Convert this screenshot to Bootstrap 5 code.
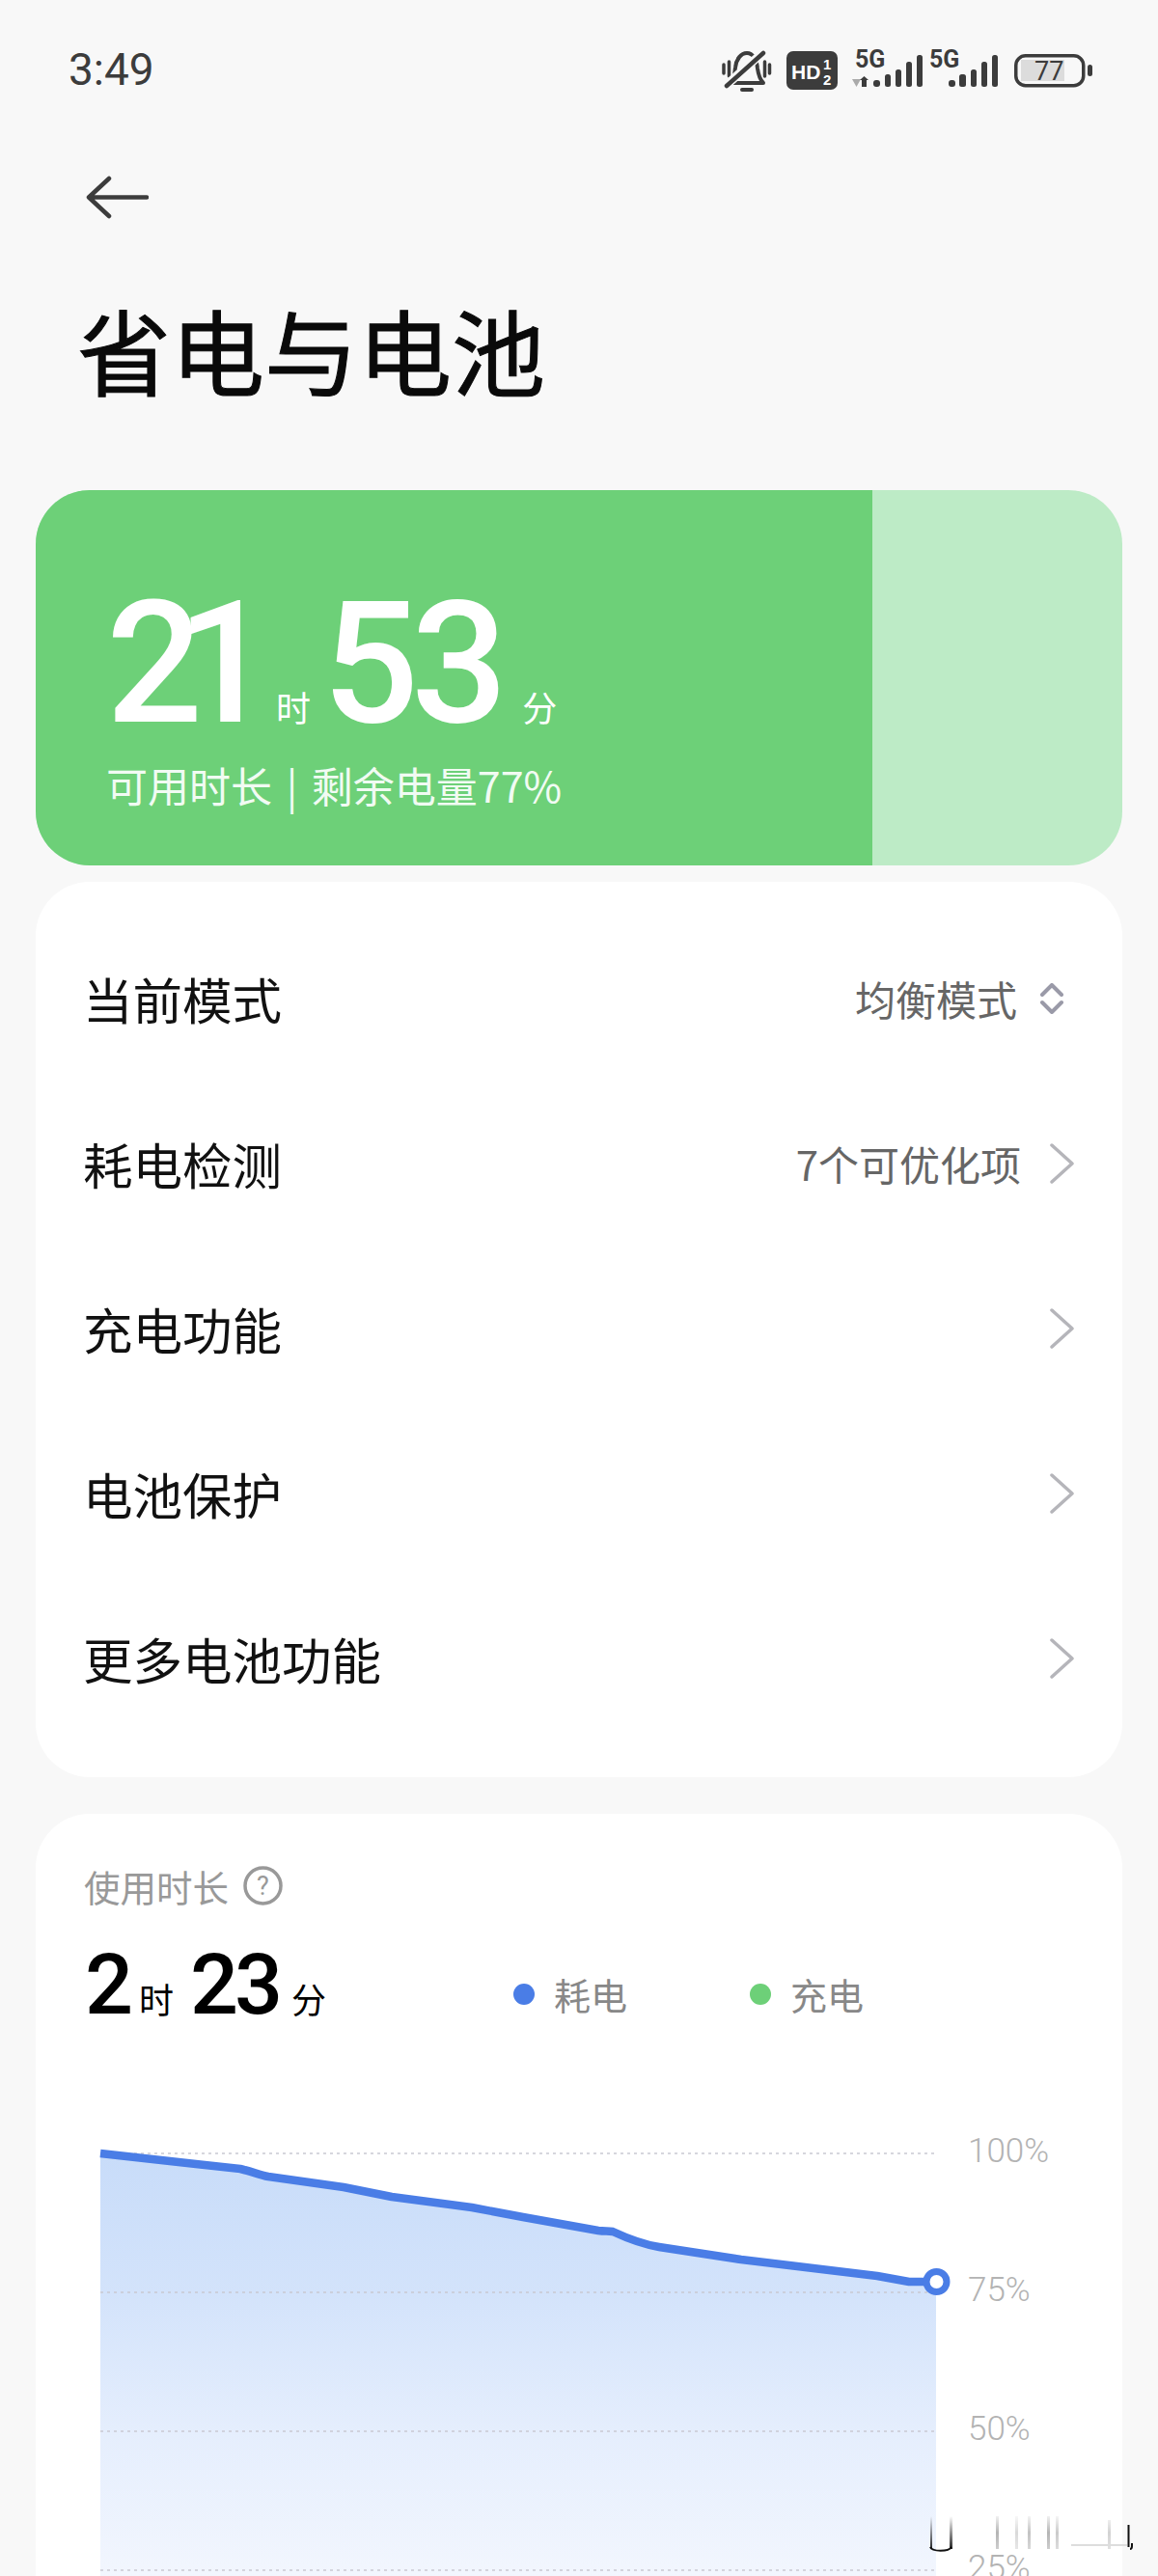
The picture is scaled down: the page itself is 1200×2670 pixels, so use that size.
<!DOCTYPE html>
<html lang="zh">
<head>
<meta charset="utf-8">
<title>省电与电池</title>
<link href="https://cdn.jsdelivr.net/npm/bootstrap@5.3.0/dist/css/bootstrap.min.css" rel="stylesheet">
<style>
html,body{height:2670px;overflow:hidden;}
body{background:#f8f8f8;font-family:"Noto Sans CJK SC","Noto Sans",sans-serif;width:1200px;position:relative;}
.num{font-family:Roboto,"Noto Sans CJK SC",sans-serif;}
.status-row{height:96px;padding:44px 68px 0 71px;}
.clock{font-family:Roboto,sans-serif;font-size:46px;line-height:44px;color:#3c3c3c;margin-top:6px;font-weight:400;}
.status-icons svg{display:block;height:52px;}
.back-wrap{padding:86px 0 0 89px;height:131px;}
.back-wrap svg{display:block;}
.page-title{font-size:97px;line-height:120px;font-weight:400;-webkit-text-stroke:1px #0a0a0a;color:#0a0a0a;margin:74px 0 87px 80px;}
.sheet{margin:0 37px;border:0;border-radius:56px;overflow:hidden;}
.batt-card{height:389px;background:#bdebc6;margin-bottom:17px;}
.batt-fill{background:#6dd078;height:100%;color:#fff;padding:100px 0 0 73px;}
.batt-big{font-size:176px;line-height:160px;font-weight:500;letter-spacing:-8px;}
.batt-big-tight{letter-spacing:-27px;}
.batt-unit{font-size:36px;line-height:40px;}
.batt-unit-h{margin:0 12px 0 30px;}
.batt-unit-m{margin-left:23px;}
.batt-time{align-items:baseline;}
.batt-sub{font-size:43px;line-height:56px;word-spacing:5px;color:#f1fbf3;margin-top:17px;font-weight:400;}
.menu-card{height:928px;margin-bottom:38px;padding:35px 0 37px;background:#fff;}
.menu-row{height:171px;border:0;padding:0 50px 0 49px;background:transparent;}
.menu-name{font-size:51.5px;color:#111;}
.menu-val{font-size:42px;color:#666;}
.menu-row svg{display:block;}
.val-mode{gap:24px;margin-right:11px;}
.val-count{gap:30px;}
.use-card{height:900px;background:#fff;padding:54px 0 0 50px;border-radius:56px 56px 0 0;}
.use-head{font-size:37.5px;line-height:41px;color:#999;gap:15px;}
.use-time{margin-top:42px;color:#000;height:80px;margin-left:1px;}
.use-big{font-size:88px;line-height:80px;font-weight:500;letter-spacing:-4px;}
.use-unit{font-size:36px;line-height:40px;}
.use-unit-h{margin:0 17px 0 10px;}
.use-unit-m{margin-left:13px;}
.legend-wrap{margin:28px 0 0 194px;gap:127px;font-size:38px;color:#888;line-height:44px;}
.legend-dot{width:22px;height:22px;border-radius:50%;margin-right:20px;}
.chart-wrap{margin:103px 0 0 17px;}
.chart-wrap svg{display:block;overflow:visible;}
.axis-col{gap:84px;}
.axis-label{font-family:Roboto,sans-serif;font-weight:300;font-size:35px;line-height:60px;height:60px;color:#b3b3b3;}
.glitch{position:absolute;left:880px;top:2590px;}
</style>
</head>
<body>
<div class="status-row d-flex justify-content-between align-items-start">
  <div class="clock">3:49</div>
  <div class="status-icons d-flex">
    <svg width="67" viewBox="0 -8 67 52" fill="none" stroke="#3c3c3c" stroke-linecap="round"><path d="M2 15v9M7.500 12v15M44.500 12v15M49.500 15v9" stroke-width="3.500"/><path d="M11 34h32c-4-4-5-8-6-15-1-10-5-16-11-16s-11 6-12 15c-1 7-1 12-3 16z" stroke-width="4" stroke-linejoin="round"/><path d="M5 36 43 2" stroke="#f8f8f8" stroke-width="9"/><path d="M5 37 43 3" stroke-width="4.500"/><path d="M21 41h10" stroke-width="4"/></svg>
    <svg width="68" viewBox="0 -8 68 52"><rect y="1" width="53" height="40" rx="7" fill="#3c3c3c"/><text x="5" y="30" font-family="Liberation Sans" font-weight="700" font-size="21" fill="#fff">HD</text><text x="38" y="20" font-family="Liberation Sans" font-weight="700" font-size="15" fill="#fff">1</text><text x="38" y="36" font-family="Liberation Sans" font-weight="700" font-size="15" fill="#fff">2</text></svg>
    <svg width="80" viewBox="0 -8 80 52" fill="#3c3c3c"><text x="3" y="18" font-family="Roboto" font-weight="700" font-size="25">5G</text><path d="M0 30h9l-4.500 8z" fill="#aaa"/><path d="M10 38V31H8l4.500-4 4.500 4h-2v7z"/><rect x="22" y="31" width="7" height="7" rx="3"/><rect x="34" y="25" width="6" height="13" rx="2.500"/><rect x="45" y="20" width="6" height="18" rx="2.500"/><rect x="56" y="12" width="6" height="26" rx="2.500"/><rect x="67" y="5" width="6" height="33" rx="2.500"/></svg>
    <svg width="88" viewBox="0 -8 88 52" fill="#3c3c3c"><text x="0" y="18" font-family="Roboto" font-weight="700" font-size="25">5G</text><rect x="20" y="31" width="7" height="7" rx="3"/><rect x="31" y="25" width="7" height="13" rx="2.500"/><rect x="43" y="20" width="6" height="18" rx="2.500"/><rect x="54" y="12" width="6" height="26" rx="2.500"/><rect x="65" y="5" width="6" height="33" rx="2.500"/></svg>
    <svg width="81" viewBox="0 -8 81 52"><rect x="1.750" y="5.750" width="70" height="31" rx="10" fill="none" stroke="#3c3c3c" stroke-width="3.500"/><rect x="7" y="10" width="45" height="22" fill="#dcdcdc"/><text x="21" y="31" font-family="Roboto" font-size="27" fill="#3c3c3c">77</text><rect x="76" y="15" width="5" height="12" rx="2.500" fill="#3c3c3c"/></svg>
  </div>
</div>
<div class="back-wrap">
  <svg width="65" height="45" viewBox="0 0 65 45" fill="none" stroke="#3c3c3c" stroke-width="4.500" stroke-linecap="round" stroke-linejoin="round"><path d="M3 22.500h60M24 3 3 22.500 24 42"/></svg>
</div>
<h1 class="page-title">省电与电池</h1>

<div class="card sheet batt-card d-flex flex-row">
  <div class="batt-fill" style="width:77%">
    <div class="d-flex batt-time num">
      <span class="batt-big batt-big-tight">21</span><span class="batt-unit batt-unit-h">时</span><span class="batt-big">53</span><span class="batt-unit batt-unit-m">分</span>
    </div>
    <div class="batt-sub">可用时长 | 剩余电量77%</div>
  </div>
</div>

<div class="card sheet menu-card">
  <div class="list-group list-group-flush">
    <div class="list-group-item menu-row d-flex justify-content-between align-items-center"><span class="menu-name">当前模式</span><span class="d-flex align-items-center val-mode"><span class="menu-val">均衡模式</span><svg width="24" height="32" viewBox="0 0 24 32" fill="none" stroke="#9a9aa8" stroke-width="4" stroke-linecap="round" stroke-linejoin="round"><path d="M2 12 12 2l10 10M2 20l10 10 10-10"/></svg></span></div>
    <div class="list-group-item menu-row d-flex justify-content-between align-items-center"><span class="menu-name">耗电检测</span><span class="d-flex align-items-center val-count"><span class="menu-val">7个可优化项</span><svg width="25" height="42" viewBox="0 0 25 42" fill="none" stroke="#b5b5ba" stroke-width="3.500" stroke-linecap="round" stroke-linejoin="round"><path d="M2 2l21 19L2 40"/></svg></span></div>
    <div class="list-group-item menu-row d-flex justify-content-between align-items-center"><span class="menu-name">充电功能</span><svg width="25" height="42" viewBox="0 0 25 42" fill="none" stroke="#b5b5ba" stroke-width="3.500" stroke-linecap="round" stroke-linejoin="round"><path d="M2 2l21 19L2 40"/></svg></div>
    <div class="list-group-item menu-row d-flex justify-content-between align-items-center"><span class="menu-name">电池保护</span><svg width="25" height="42" viewBox="0 0 25 42" fill="none" stroke="#b5b5ba" stroke-width="3.500" stroke-linecap="round" stroke-linejoin="round"><path d="M2 2l21 19L2 40"/></svg></div>
    <div class="list-group-item menu-row d-flex justify-content-between align-items-center"><span class="menu-name">更多电池功能</span><svg width="25" height="42" viewBox="0 0 25 42" fill="none" stroke="#b5b5ba" stroke-width="3.500" stroke-linecap="round" stroke-linejoin="round"><path d="M2 2l21 19L2 40"/></svg></div>
  </div>
</div>

<div class="card sheet use-card">
  <div class="use-head d-flex align-items-center"><span>使用时长</span>
    <svg width="41" height="41" viewBox="0 0 41 41"><circle cx="20.500" cy="20.500" r="18.500" fill="none" stroke="#999" stroke-width="3.500"/><text x="20.500" y="29.500" text-anchor="middle" font-family="Roboto" font-size="27" fill="#999">?</text></svg>
  </div>
  <div class="use-time d-flex align-items-start">
    <div class="d-flex align-items-baseline num"><span class="use-big">2</span><span class="use-unit use-unit-h">时</span><span class="use-big">23</span><span class="use-unit use-unit-m">分</span></div>
    <div class="legend-wrap d-flex">
      <span class="d-flex align-items-center"><span class="legend-dot" style="background:#4a7de6"></span>耗电</span>
      <span class="d-flex align-items-center"><span class="legend-dot" style="background:#6dd078"></span>充电</span>
    </div>
  </div>
  <div class="chart-wrap d-flex">
    <svg width="899" height="470" viewBox="104 2200 899 470">
      <defs><linearGradient id="areaFill" gradientUnits="userSpaceOnUse" x1="0" y1="2232" x2="0" y2="2670"><stop offset="0" stop-color="#c8dcf9"/><stop offset=".33" stop-color="#d3e3fb"/><stop offset=".66" stop-color="#e5eefd"/><stop offset="1" stop-color="#f2f6fe"/></linearGradient></defs>
      <path d="M104 2232L203 2243 249 2248C262 2251 268 2254 278 2256L356 2267 406 2277 489 2288 542 2298 620 2312C627 2313 630 2312 635 2313 650 2320 665 2326 683 2329L768 2342 909 2359 942 2365H970V2670H104Z" fill="url(#areaFill)"/>
      <g stroke="#c9c9d2" stroke-width="1.500" stroke-dasharray="3 4"><path d="M104 2232H970M104 2376H970M104 2520H970M104 2664H970"/></g>
      <path d="M104 2232L203 2243 249 2248C262 2251 268 2254 278 2256L356 2267 406 2277 489 2288 542 2298 620 2312C627 2313 630 2312 635 2313 650 2320 665 2326 683 2329L768 2342 909 2359 942 2365H970" fill="none" stroke="#4a7de6" stroke-width="8.500" stroke-linejoin="round"/>
      <circle cx="970.500" cy="2365" r="10.500" fill="#fff" stroke="#4a7de6" stroke-width="7"/>
    </svg>
    <div class="axis-col d-flex flex-column">
      <div class="axis-label">100%</div><div class="axis-label">75%</div><div class="axis-label">50%</div><div class="axis-label">25%</div>
    </div>
  </div>
</div>
<svg class="glitch" width="320" height="80" viewBox="880 2590 320 80" fill="none">
  <defs><linearGradient id="fadeDark" gradientUnits="userSpaceOnUse" x1="0" y1="2608" x2="0" y2="2644"><stop offset="0" stop-color="#000" stop-opacity="0"/><stop offset="1" stop-color="#000" stop-opacity=".9"/></linearGradient><linearGradient id="fadeGrey" gradientUnits="userSpaceOnUse" x1="0" y1="2606" x2="0" y2="2644"><stop offset="0" stop-color="#777" stop-opacity=".05"/><stop offset=".5" stop-color="#777" stop-opacity=".55"/><stop offset="1" stop-color="#777" stop-opacity=".35"/></linearGradient></defs>
  <rect x="964" y="2608" width="2" height="34" fill="url(#fadeDark)"/><rect x="984" y="2608" width="3" height="34" fill="url(#fadeDark)"/>
  <path d="M964 2640C966 2645 983 2645 986 2640" stroke="#111" stroke-width="2"/>
  <rect x="1032" y="2608" width="3" height="34" fill="url(#fadeGrey)"/><rect x="1052" y="2608" width="3" height="34" fill="url(#fadeGrey)" opacity=".5"/><rect x="1065" y="2608" width="3" height="34" fill="url(#fadeGrey)" opacity=".8"/><rect x="1085" y="2608" width="3" height="34" fill="url(#fadeGrey)"/><rect x="1094" y="2608" width="3" height="34" fill="url(#fadeGrey)" opacity=".7"/><rect x="1148" y="2612" width="3" height="30" fill="url(#fadeGrey)" opacity=".6"/>
  <path d="M1110 2638H1168" stroke="#ddd" stroke-width="2"/>
  <path d="M1169.500 2617V2640M1173 2636V2639C1173 2641 1172 2642 1171 2642" stroke="#111" stroke-width="2"/>
</svg>
</body>
</html>
